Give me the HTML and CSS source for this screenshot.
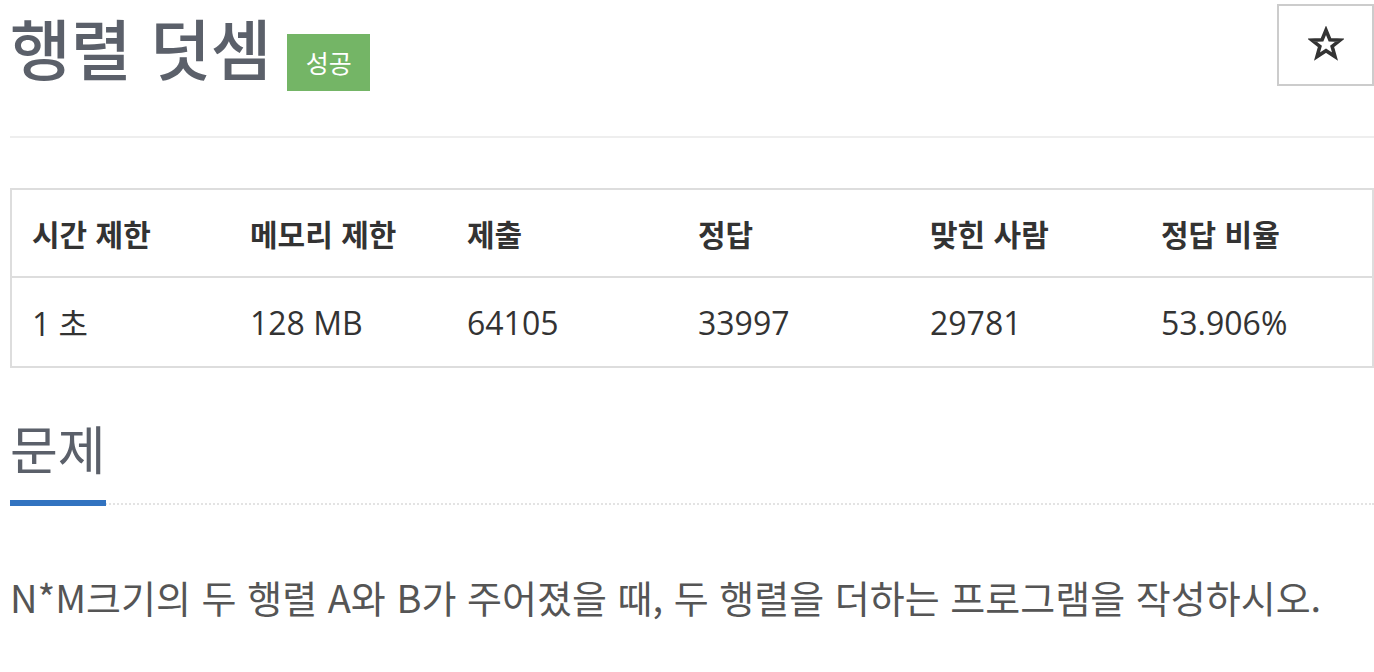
FILE: index.html
```html
<!DOCTYPE html>
<html lang="ko">
<head>
    <meta charset="UTF-8">
    <title>행렬 덧셈</title>
    <link rel="stylesheet" href="styles.css">
</head>
<body>
    <div class="page-header">
        <h1 class="title">행렬 덧셈 <span class="label-success">성공</span></h1>
        <button class="star-btn" type="button">
            <svg width="36" height="36" viewBox="0 0 24 24">
                <polygon points="12,2.8 14.6,9.2 21.4,9.4 16.1,13.6 18,20.4 12,16.5 6,20.4 7.9,13.6 2.6,9.4 9.4,9.2" fill="none" stroke="#333" stroke-width="2.4" stroke-linejoin="miter"/>
            </svg>
        </button>
    </div>

    <table class="problem-info">
        <thead>
            <tr>
                <th>시간 제한</th>
                <th>메모리 제한</th>
                <th>제출</th>
                <th>정답</th>
                <th>맞힌 사람</th>
                <th>정답 비율</th>
            </tr>
        </thead>
        <tbody>
            <tr>
                <td>1 초</td>
                <td>128 MB</td>
                <td>64105</td>
                <td>33997</td>
                <td>29781</td>
                <td>53.906%</td>
            </tr>
        </tbody>
    </table>

    <section class="problem-section">
        <div class="headline">
            <h2>문제</h2>
        </div>
        <p class="problem-text">N*M크기의 두 행렬 A와 B가 주어졌을 때, 두 행렬을 더하는 프로그램을 작성하시오.</p>
    </section>
</body>
</html>
```

FILE: styles.css
```css
body {
    margin: 0;
    padding: 0 0 0 10px;
    background: #fff;
    color: #333;
    font-family: "Open Sans", "Noto Sans CJK KR", sans-serif;
    overflow: hidden;
}
.page-header {
    display: flex;
    justify-content: space-between;
    align-items: flex-start;
    padding-top: 4px;
    height: 132px;
    border-bottom: 2px solid #eee;
}
.title {
    margin: 0;
    padding-top: 4px;
    font-family: "Noto Sans CJK KR", sans-serif;
    font-size: 66px;
    font-weight: 500;
    line-height: 76px;
    color: #5b606a;
    display: flex;
    align-items: flex-start;
}
.label-success {
    display: inline-block;
    background: #74b566;
    color: #fff;
    font-size: 25px;
    font-weight: 400;
    width: 83px;
    height: 57px;
    line-height: 57px;
    text-align: center;
    margin-top: 26px;
    margin-left: 16px;
}
.star-btn {
    display: flex;
    align-items: center;
    justify-content: center;
    width: 97px;
    height: 82px;
    background: #fff;
    border: 2px solid #ccc;
    padding: 0 0 2px 0;
}
.problem-info {
    margin-top: 50px;
    width: 1364px;
    table-layout: fixed;
    border-collapse: collapse;
    border: 2px solid #ddd;
}
.problem-info th,
.problem-info td {
    text-align: left;
    padding: 0 0 0 20px;
    color: #333;
}
.problem-info th {
    height: 86px;
    font-family: "Noto Sans CJK KR", sans-serif;
    font-size: 30px;
    font-weight: 700;
    border-bottom: 2px solid #ddd;
}
.problem-info td {
    height: 88px;
    font-size: 32px;
}
.problem-info th:nth-child(1) { width: 198px; }
.problem-info th:nth-child(2) { width: 197px; }
.problem-info th:nth-child(3) { width: 211px; }
.problem-info th:nth-child(4) { width: 212px; }
.problem-info th:nth-child(5) { width: 211px; }
.problem-section {
    margin-top: 42px;
}
.headline {
    border-bottom: 2px dotted #e3e3e3;
    margin-bottom: 66px;
}
.headline h2 {
    display: inline-block;
    margin: 0 0 -3px 0;
    padding-bottom: 14px;
    font-family: "Noto Sans CJK KR", sans-serif;
    font-size: 52px;
    font-weight: 400;
    line-height: 76px;
    color: #5b606a;
    border-bottom: 6px solid #3273c0;
}
.problem-text {
    margin: 0;
    font-family: "Noto Sans CJK KR", sans-serif;
    font-size: 38px;
    line-height: 52px;
    color: #555;
}
```
